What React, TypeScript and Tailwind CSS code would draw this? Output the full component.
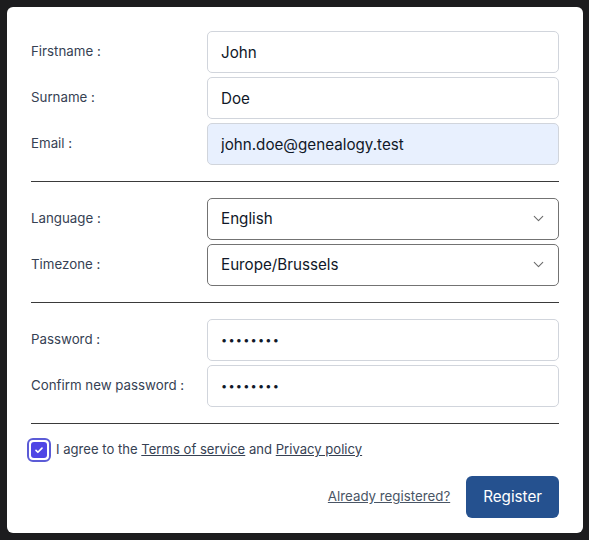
import React from 'react';
import { ChevronDown } from 'lucide-react';

const labelCls = 'text-[13.3px] text-gray-700';
const inputCls =
  'h-[42px] w-full rounded-[5px] border border-gray-300 bg-white px-[13px] text-[15.2px] text-gray-900 outline-none';

const Field: React.FC<{ label: string; children: React.ReactNode }> = ({ label, children }) => (
  <>
    <label className={labelCls}>{label}</label>
    {children}
  </>
);

const Select: React.FC<{ value: string }> = ({ value }) => (
  <div className="relative">
    <select
      value={value}
      onChange={() => {}}
      className="h-[42px] w-full appearance-none rounded-[5px] border border-[#737373] bg-white px-[13px] text-[15.2px] text-gray-900 outline-none"
    >
      <option>{value}</option>
    </select>
    <ChevronDown className="pointer-events-none absolute right-[12px] top-[12px] h-[17px] w-[17px] text-[#6b6b6b]" strokeWidth={1.5} />
  </div>
);

export default function App() {
  return (
    <div className="min-h-[540px] bg-[#1c1c1e] py-[7px] pl-[7px] pr-[6px] font-['Inter',sans-serif]">
      <div className="h-[526px] rounded-[6px] bg-white px-6 pt-6 pb-4">
        {/* Identity */}
        <div className="grid grid-cols-[176px_1fr] items-center gap-y-[4px]">
          <Field label="Firstname :">
            <input className={inputCls} value="John" readOnly />
          </Field>
          <Field label="Surname :">
            <input className={inputCls} value="Doe" readOnly />
          </Field>
          <Field label="Email :">
            <input className={inputCls + ' !bg-[#e8f0fe]'} value="john.doe@genealogy.test" readOnly />
          </Field>
        </div>

        <hr className="my-4 border-[#3a3a3a]" />

        {/* Preferences */}
        <div className="grid grid-cols-[176px_1fr] items-center gap-y-[4px]">
          <Field label="Language :">
            <Select value="English" />
          </Field>
          <Field label="Timezone :">
            <Select value="Europe/Brussels" />
          </Field>
        </div>

        <hr className="my-4 border-[#3a3a3a]" />

        {/* Password */}
        <div className="grid grid-cols-[176px_1fr] items-center gap-y-[4px]">
          <Field label="Password :">
            <input type="password" className={inputCls + ' !text-[11px] tracking-[1.2px]'} value="password" readOnly />
          </Field>
          <Field label="Confirm new password :">
            <input type="password" className={inputCls + ' !text-[11px] tracking-[1.2px]'} value="password" readOnly />
          </Field>
        </div>

        <hr className="mt-4 mb-[14px] border-[#3a3a3a]" />

        <div className="-ml-[4px] flex items-center gap-[5px]">
          <span className="flex h-[24px] w-[24px] items-center justify-center rounded-[6px] border-2 border-[#5b5bd6] bg-white">
            <span className="flex h-[16px] w-[16px] items-center justify-center rounded-[3px] bg-[#4f46e5]">
              <svg viewBox="0 0 16 16" className="h-[12px] w-[12px]" fill="none" stroke="white" strokeWidth="2.2" strokeLinecap="round" strokeLinejoin="round">
                <path d="M4 8.5l2.5 2.5L12 5.5" />
              </svg>
            </span>
          </span>
          <span className="text-[13.1px] text-gray-700">
            I agree to the <a className="underline">Terms of service</a> and <a className="underline">Privacy policy</a>
          </span>
        </div>

        <div className="mt-[14px] flex items-center justify-end gap-4">
          <a className="text-[13.3px] text-gray-600 underline">Already registered?</a>
          <button className="h-[42px] rounded-[6px] bg-[#25518f] px-[17px] text-[15.2px] text-white">Register</button>
        </div>
      </div>
    </div>
  );
}
